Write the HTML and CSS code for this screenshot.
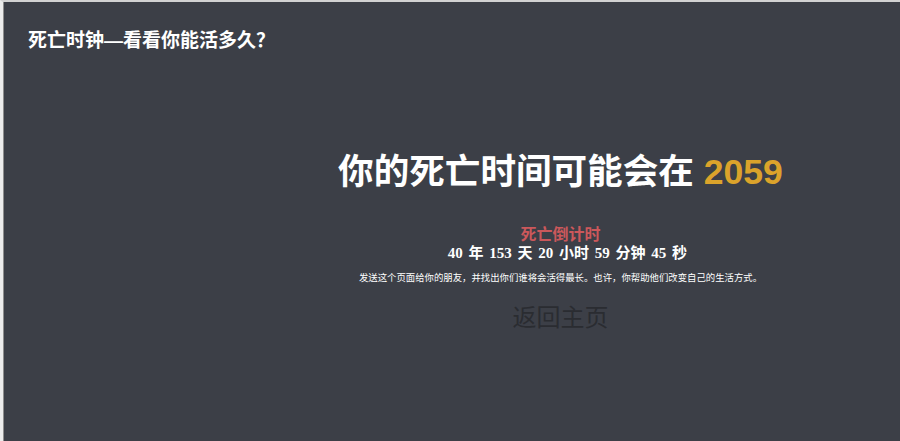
FILE: index.html
```html
<!DOCTYPE html>
<html lang="zh-CN">
<head>
<meta charset="utf-8">
<title>死亡时钟—看看你能活多久？</title>
<link rel="stylesheet" href="styles.css">
</head>
<body>
<div class="frame">
  <header class="site-header">
    <h1 class="site-title">死亡时钟—看看你能活多久？</h1>
  </header>
  <main class="result">
    <h2 class="result-title">你的死亡时间可能会在 <span class="year">2059</span></h2>
    <div class="countdown-label">死亡倒计时</div>
    <div class="countdown">40 年 153 天 20 小时 59 分钟 45 秒</div>
    <p class="share">发送这个页面给你的朋友，并找出你们谁将会活得最长。也许，你帮助他们改变自己的生活方式。</p>
    <a class="home-link" href="#">返回主页</a>
  </main>
</div>
</body>
</html>
```

FILE: styles.css
```css
html {
  background: #e6e6e6;
}
body {
  margin: 0;
  font-family: "Liberation Sans", "Noto Sans CJK SC", sans-serif;
}
.frame {
  height: 100vh;
  box-sizing: border-box;
  background: #3c3f47;
  border-top: 2px solid #d2d2d2;
  border-left: 3px solid #ececec;
  box-shadow: inset 1px 0 0 #8e8e8e;
  overflow: hidden;
}
.site-header {
  padding: 27px 0 0 25px;
}
.site-title {
  margin: 0;
  font-size: 19px;
  line-height: 24px;
  font-weight: bold;
  color: #ffffff;
}
.result {
  padding-left: 218px;
  text-align: center;
}
.result-title {
  margin: 97px 0 0;
  font-size: 35.6px;
  line-height: 44px;
  font-weight: bold;
  color: #ffffff;
}
.year {
  color: #dba32b;
}
.countdown-label {
  margin-top: 32px;
  font-size: 16px;
  line-height: 18px;
  font-weight: bold;
  color: #cb585b;
}
.countdown {
  padding-left: 14px;
  font-family: "Liberation Serif", "Noto Sans CJK SC", serif;
  font-size: 15px;
  line-height: 18px;
  font-weight: bold;
  color: #ffffff;
  word-spacing: 2px;
}
.share {
  margin: 9px 0 0;
  font-size: 9.4px;
  line-height: 14px;
  color: #ffffff;
}
.home-link {
  display: inline-block;
  margin-top: 18px;
  font-size: 24px;
  line-height: 30px;
  color: #2a2c31;
  text-decoration: none;
}
```
